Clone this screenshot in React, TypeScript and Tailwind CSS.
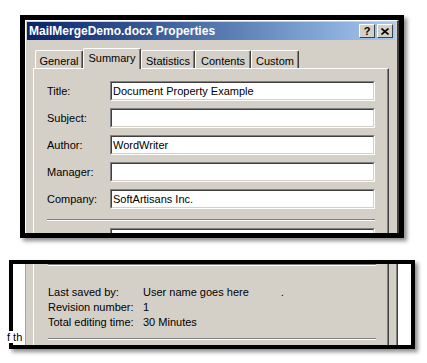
import React from "react";

function Field({ label, value }: { label: string; value?: string }) {
  return (
    <div className="flex items-center h-[20px]">
      <div className="w-[63px] leading-[14px]">{label}</div>
      <div className="w-[265px] h-[20px] border border-t-[#808080] border-l-[#808080] border-b-white border-r-white">
        <div className="h-full bg-white border border-t-[#404040] border-l-[#404040] border-b-[#d4d0c8] border-r-[#d4d0c8] pl-[1px] flex items-center leading-[14px]">
          {value}
        </div>
      </div>
    </div>
  );
}

function Tab({ label, w, selected }: { label: string; w: string; selected?: boolean }) {
  return (
    <div
      className={
        selected
          ? `${w} h-[21px] -mb-[1px] relative z-10 bg-[#d4d0c8] border-l border-t border-white border-r border-r-[#404040] shadow-[inset_-1px_0_0_#808080] rounded-t-[2px] flex justify-center pt-[2px] leading-[14px]`
          : `${w} h-[18px] bg-[#d4d0c8] border-l border-t border-white border-r border-r-[#404040] shadow-[inset_-1px_0_0_#808080] rounded-t-[2px] flex justify-center pt-[3px] leading-[14px]`
      }
    >
      {label}
    </div>
  );
}

export default function App() {
  return (
    <div className="w-[427px] h-[363px] bg-white relative overflow-hidden text-[11px] text-black font-['Liberation_Sans',Arial,sans-serif]">
      {/* Top framed panel */}
      <div className="ml-[20px] mt-[15px] w-[384px] h-[223px] border-[5px] border-black shadow-[3px_3px_4px_rgba(0,0,0,0.45)] overflow-hidden">
        <div className="h-full bg-[#d4d0c8] border-l border-t border-white border-r-2 border-r-[#404040] pl-[1px] pt-[1px] pr-[2px]">
          {/* Title bar */}
          <div className="h-[18px] flex items-center justify-between bg-linear-to-r from-[#0a246a] to-[#a6caf0] pl-[2px] pr-[2px]">
            <span className="text-white font-bold text-[12px] leading-[14px]">MailMergeDemo.docx Properties</span>
            <div className="flex gap-[2px]">
              <div className="w-[16px] h-[14px] bg-[#d4d0c8] border border-white border-r-[#404040] border-b-[#404040] flex items-center justify-center font-bold text-[11px] leading-[10px]">
                ?
              </div>
              <div className="w-[16px] h-[14px] bg-[#d4d0c8] border border-white border-r-[#404040] border-b-[#404040] flex items-center justify-center">
                <svg width="8" height="7" viewBox="0 0 8 7">
                  <path d="M0.5 0.5 L7.5 6.5 M7.5 0.5 L0.5 6.5" stroke="#000" strokeWidth="1.6" />
                </svg>
              </div>
            </div>
          </div>
          {/* Tabs */}
          <div className="mt-[8px] pl-[8px] flex items-end h-[20px]">
            <Tab label="General" w="w-[48px]" />
            <Tab label="Summary" w="w-[58px]" selected />
            <Tab label="Statistics" w="w-[54px]" />
            <Tab label="Contents" w="w-[56px]" />
            <Tab label="Custom" w="w-[48px]" />
          </div>
          {/* Tab panel */}
          <div className="ml-[6px] w-[356px] h-[200px] border-l border-t border-white border-r border-r-[#404040] shadow-[inset_-1px_0_0_#808080] pl-[13px] pt-[12px]">
            <div className="flex flex-col gap-[7px]">
              <Field label="Title:" value="Document Property Example" />
              <Field label="Subject:" />
              <Field label="Author:" value="WordWriter" />
              <Field label="Manager:" />
              <Field label="Company:" value="SoftArtisans Inc." />
            </div>
            <div className="mt-[10px] w-[328px] h-[2px] border-t border-t-[#808080] border-b border-b-white" />
            <div className="mt-[7px]">
              <Field label="Category:" />
            </div>
          </div>
        </div>
      </div>

      {/* Bottom framed panel */}
      <div className="ml-[9px] mt-[22px] w-[406px] h-[89px] border-4 border-black shadow-[3px_3px_4px_rgba(0,0,0,0.45)] overflow-hidden">
        <div className="flex h-full">
          <div className="w-[12px] bg-white" />
          <div className="w-[373px] h-full bg-[#d4d0c8] border-l border-l-[#aaa69e] border-r border-r-[#404040] shadow-[inset_-1px_0_0_#808080] pl-[7px]">
            <div className="w-[356px] h-full border-l border-white border-r border-r-[#404040] shadow-[inset_-1px_0_0_#808080] pl-[14px]">
              <div className="w-[328px] h-[2px] border-t border-t-[#808080] border-b border-b-white" />
              <div className="mt-[19px] flex flex-col">
                <div className="flex h-[15px] items-center">
                  <div className="w-[95px]">Last saved by:</div>
                  <div>User name goes here</div>
                  <div className="ml-[32px]">.</div>
                </div>
                <div className="flex h-[15px] items-center">
                  <div className="w-[95px]">Revision number:</div>
                  <div>1</div>
                </div>
                <div className="flex h-[15px] items-center">
                  <div className="w-[95px]">Total editing time:</div>
                  <div>30 Minutes</div>
                </div>
              </div>
              <div className="mt-[8px] w-[328px] h-[2px] border-t border-t-[#808080] border-b border-b-white" />
            </div>
          </div>
          <div className="flex-1 bg-white" />
        </div>
      </div>

      {/* Document text peeking over the frame */}
      <div className="absolute left-[6px] top-[331px] w-[19px] h-[12px] bg-white overflow-hidden leading-[12px] pl-[1px]">
        f th
      </div>
    </div>
  );
}
